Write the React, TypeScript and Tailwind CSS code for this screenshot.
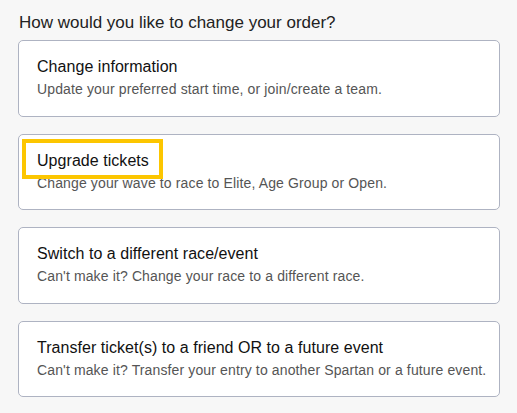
const options = [
  {
    title: "Change information",
    desc: "Update your preferred start time, or join/create a team.",
  },
  {
    title: "Upgrade tickets",
    desc: "Change your wave to race to Elite, Age Group or Open.",
    highlight: true,
  },
  {
    title: "Switch to a different race/event",
    desc: "Can't make it? Change your race to a different race.",
  },
  {
    title: "Transfer ticket(s) to a friend OR to a future event",
    desc: "Can't make it? Transfer your entry to another Spartan or a future event.",
  },
]

export default function App() {
  return (
    <div className="min-h-screen w-[517px] h-[413px] overflow-hidden bg-[#f7f7f7] font-['Liberation_Sans',Arial,sans-serif]">
      <div className="pl-[18px] pr-[17px] pt-[13px]">
        <h1 className="text-[17px] leading-[20px] text-[#222] mb-[7px] ml-[1px]">How would you like to change your order?</h1>

        <div className="flex flex-col gap-[17px]">
          {options.map((o) => (
            <div
              key={o.title}
              className="relative h-[76.5px] bg-white border border-[#aeb3c2] rounded-[5px] pl-[18px] pt-[16px]"
            >
              <p className="text-[16px] leading-[20px] text-[#111] tracking-[0.05px]">{o.title}</p>
              <p className="mt-[4px] text-[14px] leading-[17px] text-[#555] tracking-[0.13px]">{o.desc}</p>
              {o.highlight && (
                <div className="absolute left-[3px] top-[4px] w-[141px] h-[40px] border-[4px] border-[#fcc600]" />
              )}
            </div>
          ))}
        </div>
      </div>
    </div>
  )
}
